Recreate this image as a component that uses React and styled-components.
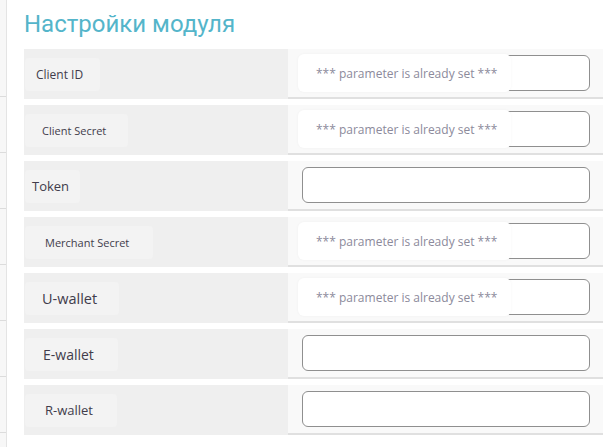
import styled, { createGlobalStyle } from 'styled-components';

const GlobalStyle = createGlobalStyle`
    body {
        margin: 0;
        background: #ffffff;
        font-family: 'Open Sans', 'Liberation Sans', sans-serif;
    }
`

const Page = styled.div`
    display: flex;
    width: 603px;
    height: 447px;
    overflow: hidden;
`

const SideStrip = styled.div`
    width: 6px;
    flex-shrink: 0;
    background: #f7f7f7;
    border-right: 1px solid #e4e4e4;
    padding-top: 41px;
    display: flex;
    flex-direction: column;
`

const StripCell = styled.div`
    height: 55px;
    flex-shrink: 0;
    border-bottom: 1px solid #dcdcdc;
`

const Main = styled.div`
    flex: 1;
    padding-left: 17px;
`

const Title = styled.h1`
    margin: 0;
    padding-top: 10px;
    height: 28px;
    margin-bottom: 11px;
    font-family: Roboto, 'Liberation Sans', sans-serif;
    font-weight: 400;
    font-size: 24px;
    line-height: 28px;
    color: #54b5ca;
`

const Rows = styled.div`
    display: flex;
    flex-direction: column;
    gap: 6px;
`

const Row = styled.div`
    display: grid;
    grid-template-columns: 264px 1fr;
    height: 50px;
`

const LabelCell = styled.div`
    background: #efefef;
    display: flex;
    align-items: center;
`

const LabelBox = styled.div`
    height: 33px;
    width: ${p => p.$w}px;
    padding-left: ${p => p.$pad}px;
    box-sizing: border-box;
    margin-left: 1px;
    background: #f3f3f3;
    border-radius: 4px;
    display: flex;
    align-items: center;
    font-size: ${p => p.$size}px;
    color: #413c4b;
`

const FieldCell = styled.div`
    background: #f9f9f9;
    border-bottom: 2px solid #e0e0e0;
    display: flex;
    align-items: center;
    padding-left: 14px;
`

const InputWrap = styled.div`
    position: relative;
    width: 288px;
    height: 36px;
    box-sizing: border-box;
    border: 1px solid #8f8f8f;
    border-radius: 6px;
    background: #ffffff;

    ${p => p.$set && `
        &::before {
            content: '';
            position: absolute;
            left: -5px;
            top: -2px;
            bottom: -2px;
            width: 213px;
            background: #ffffff;
            border-radius: 6px;
            box-shadow: 0 0 3px rgba(0, 0, 0, 0.04);
        }
    `}
`

const Placeholder = styled.span`
    position: absolute;
    left: 13px;
    top: 0;
    bottom: 0;
    display: flex;
    align-items: center;
    font-size: 12px;
    color: #8c8a9b;
    white-space: nowrap;
`

const fields = [
    { label: 'Client ID', size: 12, w: 75, pad: 11, set: true },
    { label: 'Client Secret', size: 11, w: 103, pad: 17, set: true },
    { label: 'Token', size: 13, w: 55, pad: 7, set: false },
    { label: 'Merchant Secret', size: 11, w: 128, pad: 20, set: true },
    { label: 'U-wallet', size: 14.5, w: 94, pad: 17, set: true },
    { label: 'E-wallet', size: 14, w: 93, pad: 18, set: false },
    { label: 'R-wallet', size: 13, w: 92, pad: 20, set: false },
]

export default function App() {
    return (
        <>
            <GlobalStyle />
            <Page>
                <SideStrip>
                    {fields.map(f => <StripCell key={f.label} />)}
                </SideStrip>
                <Main>
                    <Title>Настройки модуля</Title>
                    <Rows>
                        {fields.map(f => (
                            <Row key={f.label}>
                                <LabelCell>
                                    <LabelBox $w={f.w} $pad={f.pad} $size={f.size}>
                                        {f.label}
                                    </LabelBox>
                                </LabelCell>
                                <FieldCell>
                                    <InputWrap $set={f.set}>
                                        {f.set && (
                                            <Placeholder>*** parameter is already set ***</Placeholder>
                                        )}
                                    </InputWrap>
                                </FieldCell>
                            </Row>
                        ))}
                    </Rows>
                </Main>
            </Page>
        </>
    );
}
